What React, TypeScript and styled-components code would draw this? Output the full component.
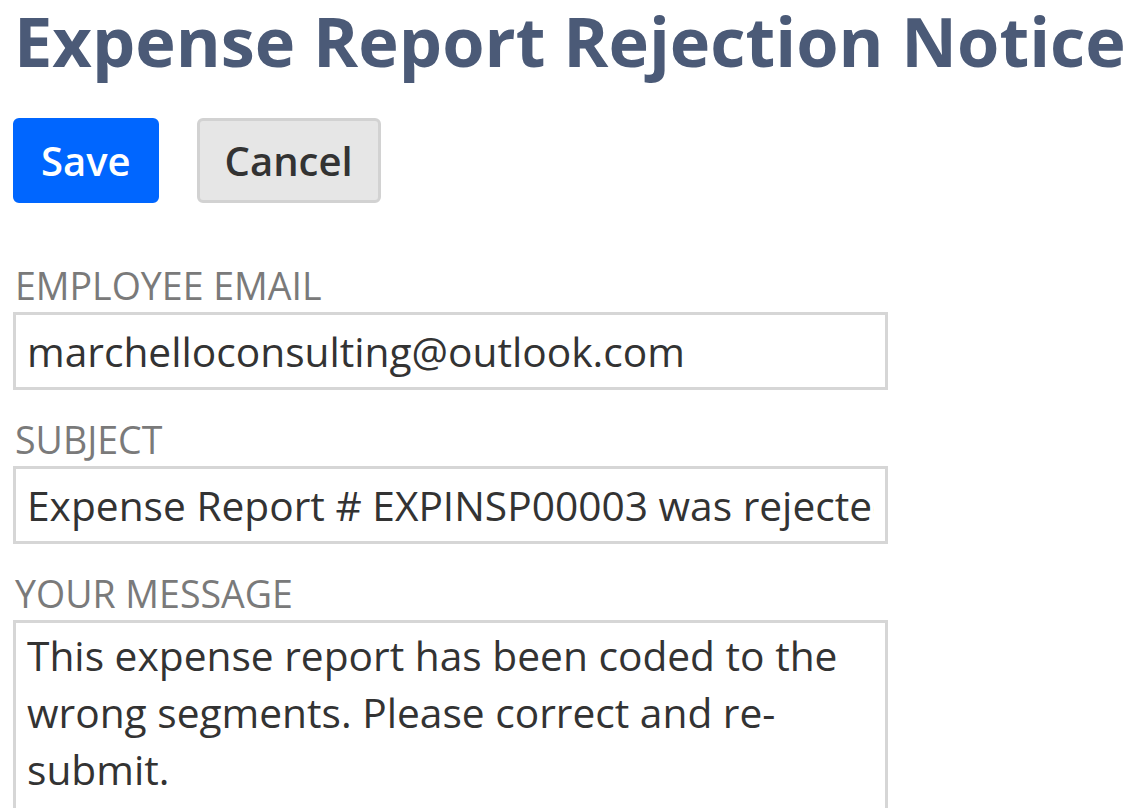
import React from "react";
import styled, { createGlobalStyle } from "styled-components";

const Global = createGlobalStyle`
  html, body { margin: 0; padding: 0; background: #ffffff; }
  body { font-family: "Open Sans", "Liberation Sans", sans-serif; overflow: hidden; }
  * { box-sizing: border-box; }
`;

const Page = styled.div`
  padding: 4px 0 0 13px;
  display: flex;
  flex-direction: column;
`;

const Title = styled.h1`
  margin: 0 0 0 1px;
  font-size: 68.5px;
  line-height: 74px;
  font-weight: 700;
  color: #4b5a77;
  white-space: nowrap;
`;

const Toolbar = styled.div`
  display: flex;
  gap: 38px;
  margin-top: 40px;
`;

const Button = styled.button<{ $primary?: boolean }>`
  height: 85px;
  padding: 0 25px;
  border-radius: 6px;
  font-family: "Open Sans", "Liberation Sans", sans-serif;
  font-size: 40px;
  font-weight: 600;
  cursor: pointer;
  background: ${(p) => (p.$primary ? "#0066ff" : "#e6e6e6")};
  color: ${(p) => (p.$primary ? "#ffffff" : "#333333")};
  border: 3px solid ${(p) => (p.$primary ? "#0066ff" : "#d2d2d2")};
`;

const Form = styled.div`
  display: flex;
  flex-direction: column;
  gap: 29px;
  margin-top: 62px;
  width: 875px;
`;

const Field = styled.div`
  display: flex;
  flex-direction: column;
`;

const Label = styled.label`
  font-size: 37.5px;
  line-height: 42px;
  color: #7a7a7a;
  margin: 0 0 5px 2px;
  text-transform: uppercase;
`;

const TextInput = styled.input`
  width: 100%;
  height: 78px;
  border: 3px solid #d6d6d6;
  padding: 0 11px;
  font-family: "Open Sans", "Liberation Sans", sans-serif;
  font-size: 40.7px;
  color: #333333;
  background: #ffffff;
  outline: none;
`;

const TextArea = styled.textarea`
  width: 100%;
  height: 260px;
  border: 3px solid #d6d6d6;
  padding: 4px 11px;
  font-family: "Open Sans", "Liberation Sans", sans-serif;
  font-size: 40.7px;
  line-height: 57px;
  color: #333333;
  background: #ffffff;
  resize: none;
  outline: none;
  overflow: hidden;
`;

export default function App() {
  return (
    <>
      <Global />
      <Page>
        <Title>Expense Report Rejection Notice</Title>
        <Toolbar>
          <Button $primary>Save</Button>
          <Button>Cancel</Button>
        </Toolbar>
        <Form>
          <Field>
            <Label>Employee Email</Label>
            <TextInput readOnly value="marchelloconsulting@outlook.com" />
          </Field>
          <Field>
            <Label>Subject</Label>
            <TextInput readOnly value="Expense Report # EXPINSP00003 was rejected" />
          </Field>
          <Field>
            <Label>Your Message</Label>
            <TextArea
              readOnly
              value="This expense report has been coded to the wrong segments. Please correct and re-submit."
            />
          </Field>
        </Form>
      </Page>
    </>
  );
}
